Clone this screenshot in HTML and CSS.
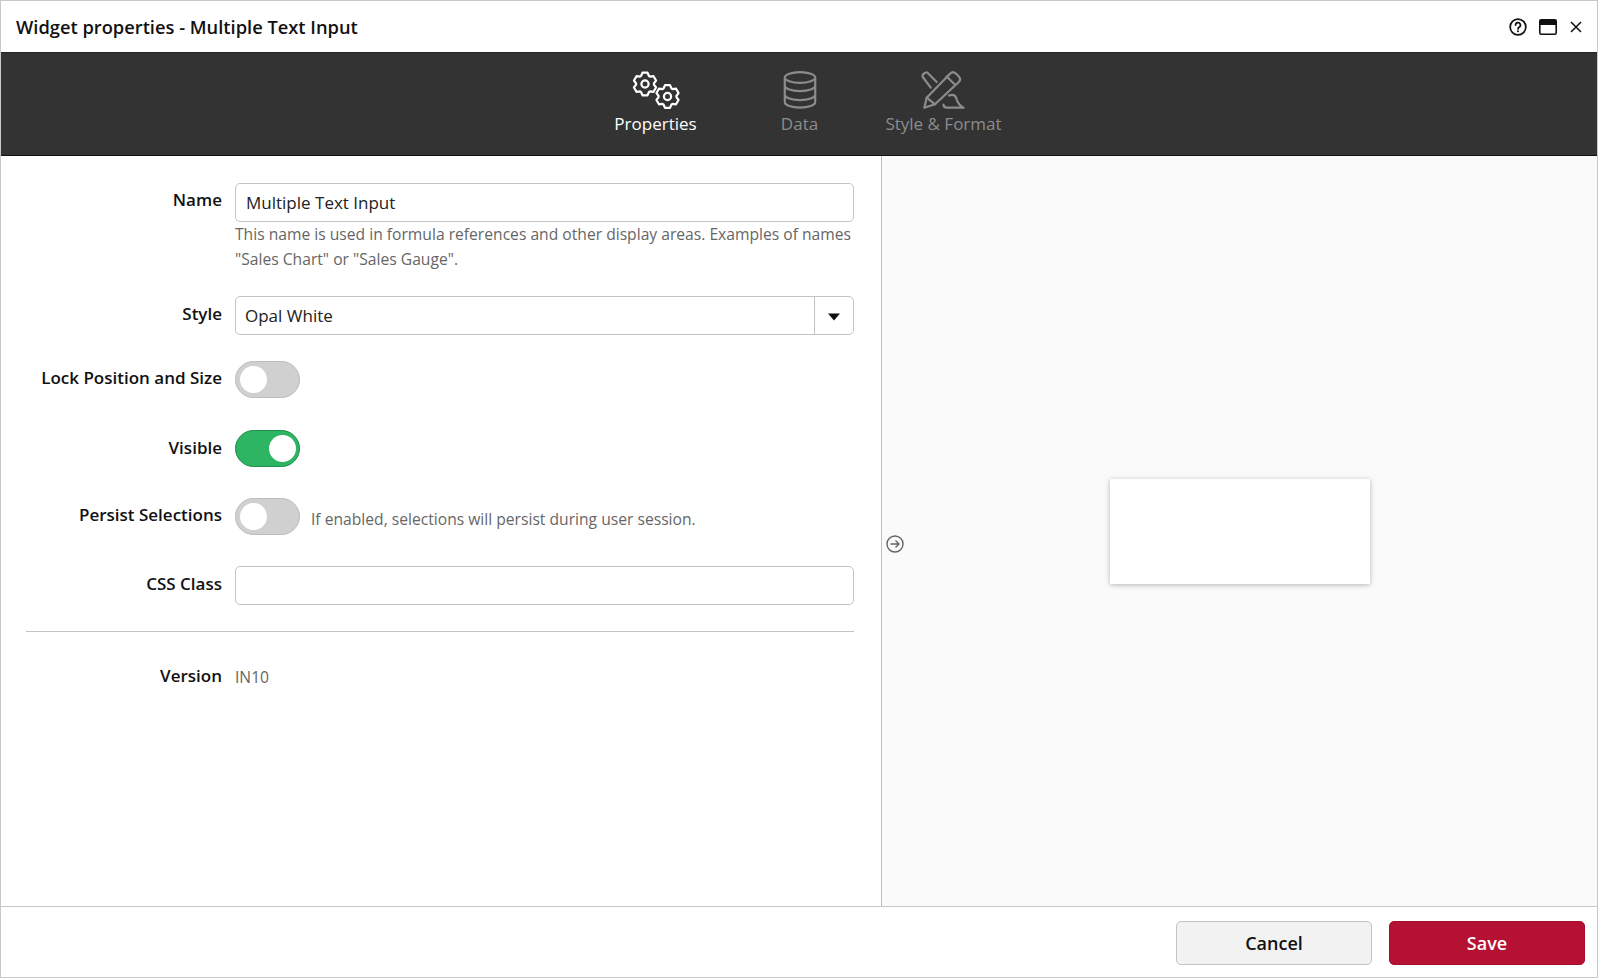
FILE: index.html
```html
<!DOCTYPE html>
<html lang="en">
<head>
<meta charset="utf-8">
<title>Widget properties</title>
<link rel="stylesheet" href="styles.css">
</head>
<body>
<div class="dialog">
  <header class="titlebar">
    <h1 class="title">Widget properties - Multiple Text Input</h1>
    <div class="win-actions">
      <svg class="ico-help" width="18" height="18" viewBox="0 0 20 20" fill="none" stroke="#111" stroke-width="1.9"><circle cx="10" cy="10" r="8.700"/><path d="M7.300 7.800a2.700 2.700 0 1 1 4 2.400c-.9.500-1.300 1-1.300 1.900" stroke-linecap="round"/><circle cx="10" cy="14.800" r="1.100" fill="#111" stroke="none"/></svg>
      <svg class="ico-max" width="18" height="16" viewBox="0 0 18 16"><rect x="0.800" y="0.800" width="16.400" height="14.400" rx="1.400" fill="#fff" stroke="#111" stroke-width="1.600"/><rect x="0.800" y="0.800" width="16.400" height="5.200" fill="#111"/></svg>
      <svg class="ico-close" width="12" height="12" viewBox="0 0 12 12" stroke="#111" stroke-width="1.500"><path d="M1 1l10 10M11 1L1 11"/></svg>
    </div>
  </header>
  <nav class="tabs">
    <div class="tab tab-active tab-props">
      <svg width="48" height="40" viewBox="0 0 48 40" fill="none" stroke="#fff" stroke-width="2.200" stroke-linejoin="round">
        <defs><path id="gear" d="M-4-8L-2.500-11.300H2.500L4-8L4.930-7.460L8.540-7.820L11.040-3.480L8.930-.54V.54L11.040 3.490L8.530 7.820L4.940 7.460L4 8L2.500 11.300H-2.500L-4 8L-4.930 7.460L-8.540 7.820L-11.040 3.480L-8.930 .54V-.54L-11.040-3.490L-8.530-7.820L-4.940-7.460Z"/></defs>
        <g transform="translate(13 14)"><use href="#gear"/><circle r="3.600"/></g>
        <g transform="translate(35.500 26.500)"><use href="#gear"/><circle r="3.600"/></g>
      </svg>
      <span>Properties</span>
    </div>
    <div class="tab tab-data">
      <svg width="36" height="40" viewBox="0 0 36 40" fill="none" stroke="#8c8c8c" stroke-width="2.200">
        <ellipse cx="18" cy="7.500" rx="15.200" ry="5.400"/>
        <path d="M2.800 7.500V32c0 3.400 6.800 5.600 15.200 5.600S33.200 35.400 33.200 32V7.500"/>
        <path d="M2.800 15.500c0 3.400 6.800 5.600 15.200 5.600s15.200-2.200 15.200-5.600"/>
        <path d="M2.800 24.500c0 3.400 6.800 5.600 15.200 5.600s15.200-2.200 15.200-5.600"/>
      </svg>
      <span>Data</span>
    </div>
    <div class="tab tab-style">
      <svg width="44" height="40" viewBox="0 0 44 40" fill="none" stroke="#8c8c8c" stroke-width="2.200" stroke-linejoin="round" stroke-linecap="round">
        <path d="M2.300 37.700L4.700 27.700L28 3.800C30 1.800 32 1.800 33.800 3.500L36.800 6.500C38.500 8.300 38.500 10.300 36.800 12L13 34.300Z"/>
        <path d="M4.700 27.700L13 34.300M24.700 6.500L32.800 14.500"/>
        <path d="M14.700 12L5.500 2.800C3.800 1.200 -.8 5.200 .8 7L8.700 17.700"/>
        <path d="M27 25.500C31 24 33 25 34 27.500C35 31 36 35 41.500 37.700H25C22.500 37.700 21.500 36 21.500 34.500"/>
      </svg>
      <span>Style &amp; Format</span>
    </div>
  </nav>
  <main class="body">
    <section class="form">
      <div class="row row-name">
        <label class="label">Name</label>
        <div class="field">
          <div class="input input-name">Multiple Text Input</div>
          <p class="help">This name is used in formula references and other display areas. Examples of names<br>"Sales Chart" or "Sales Gauge".</p>
        </div>
      </div>
      <div class="row row-style">
        <label class="label">Style</label>
        <div class="field">
          <div class="select"><span class="select-text">Opal White</span><span class="select-btn"><svg width="12" height="8" viewBox="0 0 12 8"><path d="M0 .500h12L6 7.500z" fill="#111"/></svg></span></div>
        </div>
      </div>
      <div class="row row-lock">
        <label class="label">Lock Position and Size</label>
        <div class="toggle"><span class="knob"></span></div>
      </div>
      <div class="row row-visible">
        <label class="label">Visible</label>
        <div class="toggle toggle-on"><span class="knob"></span></div>
      </div>
      <div class="row row-persist">
        <label class="label">Persist Selections</label>
        <div class="toggle"><span class="knob"></span></div>
        <span class="note">If enabled, selections will persist during user session.</span>
      </div>
      <div class="row row-css">
        <label class="label">CSS Class</label>
        <div class="field"><div class="input"></div></div>
      </div>
      <hr class="divider">
      <div class="row row-version">
        <label class="label">Version</label>
        <span class="value">IN10</span>
      </div>
    </section>
    <section class="preview">
      <svg class="collapse" width="20" height="20" viewBox="0 0 20 20" fill="none" stroke="#666" stroke-width="1.400"><circle cx="10" cy="10" r="8"/><path d="M5.500 10h8.500M10.500 6.500L14 10l-3.500 3.500"/></svg>
      <div class="card"></div>
    </section>
  </main>
  <footer class="footer">
    <button class="btn btn-cancel">Cancel</button>
    <button class="btn btn-save">Save</button>
  </footer>
</div>
</body>
</html>
```
FILE: styles.css
```css
* { box-sizing: border-box; }
html, body { margin: 0; height: 100%; background: #fff; }
body { font-family: "Open Sans", "Liberation Sans", sans-serif; color: #111; }
.dialog { height: 978px; width: 1598px; border: 1px solid #c8c8c8; display: flex; flex-direction: column; overflow: hidden; }
.titlebar { height: 51px; display: flex; align-items: center; justify-content: space-between; padding: 0 15px; flex: none; }
.title { margin: 0; font-size: 18.300px; font-weight: 600; color: #111; }
.win-actions { display: flex; align-items: center; gap: 13px; }
.ico-help { margin-right: -1px; }
.tabs { height: 104px; flex: none; background: #333; border-top: 1px solid #222; border-bottom: 1px solid #111; display: flex; justify-content: center; padding-left: 1px; }
.tab { display: flex; flex-direction: column; align-items: center; padding-top: 17px; font-size: 17px; color: #8c8c8c; width: 144px; }
.tab svg { display: block; height: 40px; overflow: visible; }
.tab span { margin-top: 2px; line-height: 24px; }
.tab-active { color: #fff; }
.body { flex: 1; display: flex; min-height: 0; }
.form { width: 881px; flex: none; padding: 27px 27px 0 25px; border-right: 1px solid #bdbdbd; }
.row { display: flex; }
.label { width: 196px; flex: none; margin-right: 13px; text-align: right; font-size: 17px; font-weight: 600; color: #111; line-height: 24px; }
.field { width: 619px; }
.input { height: 39px; border: 1px solid #c4c4c4; border-radius: 5px; padding: 0 10px; line-height: 37px; font-size: 17px; color: #222; background: #fff; }
.help { margin: 0; font-size: 15.650px; line-height: 25px; color: #666; white-space: nowrap; }
.row-name .label { padding-top: 5px; }
.row-style { margin-top: 24px; }
.row-style .label { padding-top: 6px; }
.select { height: 39px; border: 1px solid #c4c4c4; border-radius: 5px; display: flex; align-items: center; justify-content: space-between; }
.select-text { padding-left: 9px; font-size: 17px; color: #222; }
.select-btn { width: 39px; height: 100%; border-left: 1px solid #c4c4c4; display: flex; align-items: center; justify-content: center; padding: 3px 1px 0 0; }
.row-lock { margin-top: 26px; align-items: center; }
.row-lock .label { padding-bottom: 4px; }
.row-visible { margin-top: 32px; align-items: center; }
.row-visible .label { padding-bottom: 2px; }
.row-persist { margin-top: 31px; align-items: center; }
.row-persist .label { padding-bottom: 4px; }
.row-css { margin-top: 31px; }
.row-css .label { padding-top: 6px; }
.toggle { width: 65px; height: 37px; border-radius: 19px; border: 1px solid #bcbcbc; background: #d0d0d0; position: relative; padding: 4px; flex: none; }
.knob { display: block; width: 27px; height: 27px; border-radius: 50%; background: #fff; }
.toggle-on { background: #2db563; border-color: #1e8f4b; display: flex; justify-content: flex-end; padding-right: 3px; }
.note { margin-left: 11px; font-size: 15.650px; color: #666; padding-top: 4px; }
.divider { margin: 26px 0 0; border: 0; border-top: 1px solid #c4c4c4; }
.row-version { margin-top: 32px; }
.value { font-size: 15.650px; color: #666; line-height: 24px; padding-top: 1px; }
.preview { flex: 1; background: #fafafa; display: flex; align-items: center; justify-content: center; position: relative; }
.collapse { position: absolute; left: 3px; top: 378px; }
.card { width: 260px; height: 105px; background: #fff; box-shadow: 0 1px 5px rgba(0,0,0,.28); }
.footer { height: 71px; flex: none; border-top: 1px solid #c8c8c8; display: flex; justify-content: flex-end; align-items: center; gap: 17px; padding: 2px 12px 0 0; }
.btn { width: 196px; height: 44px; border-radius: 5px; font-family: inherit; font-size: 18px; font-weight: 600; }
.btn-cancel { background: #f2f2f2; border: 1px solid #c4c4c4; color: #111; }
.btn-save { background: #b51233; border: 1px solid #a30f2c; color: #fff; }
```
